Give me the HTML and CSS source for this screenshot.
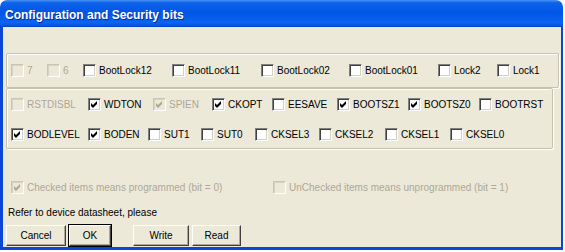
FILE: index.html
```html
<!DOCTYPE html>
<html>
   <head>
      <meta name="viewport" content="width=device-width, initial-scale=1">
      <link rel="stylesheet" href="styles.css">
   </head>
   <body>
      <div class="window">
         <div class="titlebar">Configuration and Security bits</div>
         <div class="client">
            <div class="group lockbits">
               <div class="row row1">
                  <label class="chk off"><span class="box"></span>7</label>
                  <label class="chk off"><span class="box"></span>6</label>
                  <label class="chk"><span class="box"></span>BootLock12</label>
                  <label class="chk"><span class="box"></span>BootLock11</label>
                  <label class="chk"><span class="box"></span>BootLock02</label>
                  <label class="chk"><span class="box"></span>BootLock01</label>
                  <label class="chk"><span class="box"></span>Lock2</label>
                  <label class="chk"><span class="box"></span>Lock1</label>
               </div>
            </div>
            <div class="group fusebits">
               <div class="row row2">
                  <label class="chk off"><span class="box"></span>RSTDISBL</label>
                  <label class="chk"><span class="box"><svg viewBox="0 0 11 11"><path d="M2 4 L4 6 L8 2 L8 5 L4 9 L2 7 Z"/></svg></span>WDTON</label>
                  <label class="chk off"><span class="box"><svg viewBox="0 0 11 11"><path d="M2 4 L4 6 L8 2 L8 5 L4 9 L2 7 Z"/></svg></span>SPIEN</label>
                  <label class="chk"><span class="box"><svg viewBox="0 0 11 11"><path d="M2 4 L4 6 L8 2 L8 5 L4 9 L2 7 Z"/></svg></span>CKOPT</label>
                  <label class="chk"><span class="box"></span>EESAVE</label>
                  <label class="chk"><span class="box"><svg viewBox="0 0 11 11"><path d="M2 4 L4 6 L8 2 L8 5 L4 9 L2 7 Z"/></svg></span>BOOTSZ1</label>
                  <label class="chk"><span class="box"><svg viewBox="0 0 11 11"><path d="M2 4 L4 6 L8 2 L8 5 L4 9 L2 7 Z"/></svg></span>BOOTSZ0</label>
                  <label class="chk"><span class="box"></span>BOOTRST</label>
               </div>
               <div class="row row3">
                  <label class="chk"><span class="box"><svg viewBox="0 0 11 11"><path d="M2 4 L4 6 L8 2 L8 5 L4 9 L2 7 Z"/></svg></span>BODLEVEL</label>
                  <label class="chk"><span class="box"><svg viewBox="0 0 11 11"><path d="M2 4 L4 6 L8 2 L8 5 L4 9 L2 7 Z"/></svg></span>BODEN</label>
                  <label class="chk"><span class="box"></span>SUT1</label>
                  <label class="chk"><span class="box"></span>SUT0</label>
                  <label class="chk"><span class="box"></span>CKSEL3</label>
                  <label class="chk"><span class="box"></span>CKSEL2</label>
                  <label class="chk"><span class="box"></span>CKSEL1</label>
                  <label class="chk"><span class="box"></span>CKSEL0</label>
               </div>
            </div>
            <div class="legend">
               <label class="chk off"><span class="box"><svg viewBox="0 0 11 11"><path d="M2 4 L4 6 L8 2 L8 5 L4 9 L2 7 Z"/></svg></span>Checked items means programmed (bit = 0)</label>
               <label class="chk off"><span class="box"></span>UnChecked items means unprogrammed (bit = 1)</label>
            </div>
            <div class="note">Refer to device datasheet, please</div>
            <div class="buttons">
               <button class="btn cancel">Cancel</button>
               <button class="btn ok">OK</button>
               <button class="btn write">Write</button>
               <button class="btn read">Read</button>
            </div>
         </div>
      </div>
   </body>
</html>
```

FILE: styles.css
```css
body {
margin: 0;
background: #fff;
font-family: "Liberation Sans", Arial, sans-serif;
font-size: 10px;
}
.window {
width: 563px;
height: 250px;
display: flex;
flex-direction: column;
}
.titlebar {
height: 27px;
box-sizing: border-box;
padding: 8px 0 0 5px;
border-radius: 7px 7px 0 0;
background: linear-gradient(#4a94f8 0, #0e63ea 10%, #0055e5 45%, #0b64f2 85%, #0452dc 95%, #0042c4 100%);
color: #fff;
font-weight: bold;
font-size: 12px;
text-shadow: 1px 1px 0 #0a2a9a;
}
.client {
flex: 1;
background: #ece9d8;
border-style: solid;
border-color: #0a46d8;
border-width: 0 2px 3px 3px;
box-shadow: inset 0 -1px 0 #ece9d8;
padding-left: 3px;
display: flex;
flex-direction: column;
align-items: flex-start;
}
.group {
border: 1px solid #c5c2b2;
border-radius: 2px;
box-shadow: inset 1px 1px 0 #fff, 1px 1px 0 #fff;
padding-left: 4px;
box-sizing: border-box;
}
.lockbits {
margin-top: 26px;
width: 553px;
padding-top: 10px;
padding-bottom: 10px;
}
.fusebits {
width: 547px;
padding-top: 9px;
padding-bottom: 7px;
display: flex;
flex-direction: column;
gap: 17px;
}
.row {
display: grid;
height: 13px;
}
.row1 {
grid-template-columns: 36px 36px 89px 89px 88px 89px 59px auto;
}
.row2 {
grid-template-columns: 77px 65px 59px 60px 65px 71px 71px auto;
}
.row3 {
grid-template-columns: 77px 60px 53px 54px 64px 66px 65px auto;
}
.chk {
display: flex;
align-items: center;
height: 13px;
color: #000;
white-space: nowrap;
}
.chk .box {
width: 13px;
height: 13px;
box-sizing: border-box;
margin-right: 3px;
background: #fff;
border: 1px solid;
border-color: #808080 #fff #fff #808080;
box-shadow: inset 1px 1px 0 #404040, inset -1px -1px 0 #d4d0c8;
display: flex;
align-items: center;
justify-content: center;
flex-shrink: 0;
}
.chk .box svg {
width: 11px;
height: 11px;
fill: #000;
}
.chk.off {
color: #aca899;
}
.chk.off .box {
background: #ece9d8;
border-color: #c9c6b6 #fff #fff #c9c6b6;
box-shadow: inset 1px 1px 0 #d6d3c3;
}
.chk.off .box svg {
fill: #aca899;
}
.legend {
margin-top: 32px;
padding-left: 5px;
display: grid;
grid-template-columns: 262px auto;
}
.note {
margin-top: 13px;
padding-left: 2px;
line-height: 12px;
}
.buttons {
margin-top: 6px;
display: flex;
}
.btn {
height: 21px;
padding: 0;
font-family: "Liberation Sans", Arial, sans-serif;
font-size: 10px;
color: #000;
background: #ece9d8;
border: 1px solid;
border-color: #fff #404040 #404040 #fff;
box-shadow: inset -1px -1px 0 #aca899;
}
.cancel {
width: 60px;
}
.ok {
width: 42px;
margin-left: 3px;
outline: 1px solid #000;
}
.write {
width: 56px;
margin-left: 22px;
}
.read {
width: 49px;
margin-left: 3px;
}
```
